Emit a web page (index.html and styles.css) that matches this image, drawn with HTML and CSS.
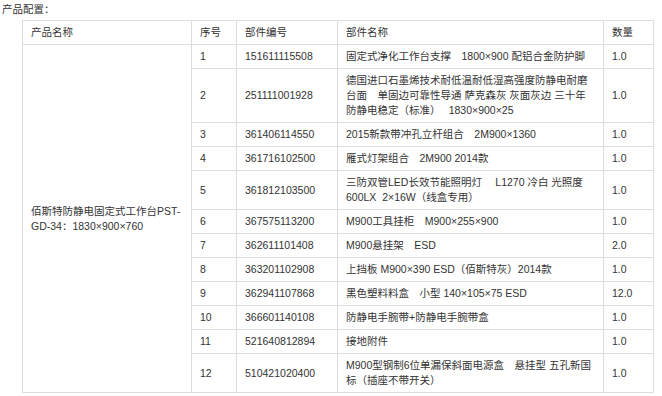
FILE: index.html
```html
<!DOCTYPE html>
<html lang="zh-CN">
<head>
<meta charset="utf-8">
<title>产品配置</title>
<link rel="stylesheet" href="styles.css">
</head>
<body>
<div class="config">
  <div class="config-title">产品配置：</div>
  <table class="config-table">
    <colgroup>
      <col class="c-name">
      <col class="c-no">
      <col class="c-code">
      <col class="c-part">
      <col class="c-qty">
    </colgroup>
    <thead>
      <tr><th>产品名称</th><th>序号</th><th>部件编号</th><th>部件名称</th><th>数量</th></tr>
    </thead>
    <tbody>
      <tr><td rowspan="12">佰斯特防静电固定式工作台PST-GD-34：1830×900×760</td><td>1</td><td>151611115508</td><td>固定式净化工作台支撑　1800×900 配铝合金防护脚</td><td>1.0</td></tr>
      <tr><td>2</td><td>251111001928</td><td>德国进口石墨烯技术耐低温耐低湿高强度防静电耐磨台面　单固边可靠性导通 萨克森灰 灰面灰边 三十年<br>防静电稳定（标准）　 1830×900×25</td><td>1.0</td></tr>
      <tr><td>3</td><td>361406114550</td><td>2015新款带冲孔立杆组合　2M900×1360</td><td>1.0</td></tr>
      <tr><td>4</td><td>361716102500</td><td>雁式灯架组合　2M900 2014款</td><td>1.0</td></tr>
      <tr><td>5</td><td>361812103500</td><td>三防双管LED长效节能照明灯　 L1270 冷白 光照度 600LX&nbsp; 2×16W（线盒专用）</td><td>1.0</td></tr>
      <tr><td>6</td><td>367575113200</td><td>M900工具挂柜　M900×255×900</td><td>1.0</td></tr>
      <tr><td>7</td><td>362611101408</td><td>M900悬挂架　ESD</td><td>2.0</td></tr>
      <tr><td>8</td><td>363201102908</td><td>上挡板 M900×390 ESD（佰斯特灰）2014款</td><td>1.0</td></tr>
      <tr><td>9</td><td>362941107868</td><td>黑色塑料料盒　小型 140×105×75 ESD</td><td>12.0</td></tr>
      <tr><td>10</td><td>366601140108</td><td>防静电手腕带+防静电手腕带盒</td><td>1.0</td></tr>
      <tr><td>11</td><td>521640812894</td><td>接地附件</td><td>1.0</td></tr>
      <tr><td>12</td><td>510421020400</td><td>M900型钢制6位单漏保斜面电源盒　悬挂型 五孔新国标（插座不带开关）</td><td>1.0</td></tr>
    </tbody>
  </table>
</div>
</body>
</html>
```
FILE: styles.css
```css
html, body {
  margin: 0;
  background: #ffffff;
}
body {
  padding: 2px;
  font-family: "Liberation Sans", "Noto Sans CJK SC", sans-serif;
  font-size: 10.5px;
  line-height: 15px;
  color: #333333;
}
.config-title {
  line-height: 15px;
}
.config-table {
  margin: 3px 0 0 20px;
  border-collapse: collapse;
  table-layout: fixed;
  width: 632px;
}
.c-name { width: 169px; }
.c-no { width: 45px; }
.c-code { width: 101px; }
.c-part { width: 266px; }
.c-qty { width: 50px; }
.config-table th,
.config-table td {
  border: 1px solid #dddddd;
  padding: 4px 8px;
  text-align: left;
  vertical-align: middle;
  font-weight: normal;
  line-height: 15px;
}
```
